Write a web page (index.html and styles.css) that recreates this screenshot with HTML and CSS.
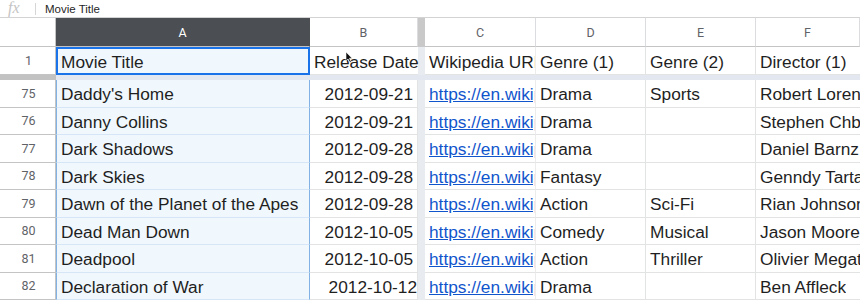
FILE: index.html
```html
<!DOCTYPE html>
<html>
<head>
<meta charset="utf-8">
<link rel="stylesheet" href="styles.css">
</head>
<body>
<div class="formula">
  <span class="fx">fx</span>
  <span class="fsep"></span>
  <span class="ftext">Movie Title</span>
</div>
<div class="grid">
  <div class="corner"></div>
  <div class="ch sel">A</div>
  <div class="ch">B</div>
  <div class="fzv-h"></div>
  <div class="ch">C</div>
  <div class="ch">D</div>
  <div class="ch">E</div>
  <div class="ch">F</div>

  <div class="rh r1">1</div>
  <div class="c r1 colA active">Movie Title</div>
  <div class="c r1 ovr">Release Date<svg class="cursor" width="8" height="11" viewBox="0 0 8 11"><path d="M1 0 L1 9 L3 7 L5 10.5 L6.3 9.8 L4.4 6.4 L7 6.2 Z" fill="#111" stroke="#fff" stroke-width="0.6"/></svg></div>
  <div class="fzv r1"></div>
  <div class="c cc r1"><span class="clip">Wikipedia URL</span></div>
  <div class="c r1">Genre (1)</div>
  <div class="c r1">Genre (2)</div>
  <div class="c r1 last"><span class="clip">Director (1)</span></div>

  <div class="fzh-rh"></div>
  <div class="fzh"></div>

  <div class="rh">75</div><div class="c colA">Daddy's Home</div><div class="c num">2012-09-21</div><div class="fzv"></div><div class="c cc"><a class="clip" href="#">https://en.wikipedia.org/wiki/Daddy%27s_Home</a></div><div class="c">Drama</div><div class="c">Sports</div><div class="c last"><span class="clip">Robert Lorenz</span></div>
  <div class="rh">76</div><div class="c colA">Danny Collins</div><div class="c num">2012-09-21</div><div class="fzv"></div><div class="c cc"><a class="clip" href="#">https://en.wikipedia.org/wiki/Danny_Collins</a></div><div class="c">Drama</div><div class="c"></div><div class="c last"><span class="clip">Stephen Chbosky</span></div>
  <div class="rh">77</div><div class="c colA">Dark Shadows</div><div class="c num">2012-09-28</div><div class="fzv"></div><div class="c cc"><a class="clip" href="#">https://en.wikipedia.org/wiki/Dark_Shadows</a></div><div class="c">Drama</div><div class="c"></div><div class="c last"><span class="clip">Daniel Barnz</span></div>
  <div class="rh">78</div><div class="c colA">Dark Skies</div><div class="c num">2012-09-28</div><div class="fzv"></div><div class="c cc"><a class="clip" href="#">https://en.wikipedia.org/wiki/Dark_Skies</a></div><div class="c">Fantasy</div><div class="c"></div><div class="c last"><span class="clip">Genndy Tartakovsky</span></div>
  <div class="rh">79</div><div class="c colA">Dawn of the Planet of the Apes</div><div class="c num">2012-09-28</div><div class="fzv"></div><div class="c cc"><a class="clip" href="#">https://en.wikipedia.org/wiki/Dawn_of_the_Planet_of_the_Apes</a></div><div class="c">Action</div><div class="c">Sci-Fi</div><div class="c last"><span class="clip">Rian Johnson</span></div>
  <div class="rh">80</div><div class="c colA">Dead Man Down</div><div class="c num">2012-10-05</div><div class="fzv"></div><div class="c cc"><a class="clip" href="#">https://en.wikipedia.org/wiki/Dead_Man_Down</a></div><div class="c">Comedy</div><div class="c">Musical</div><div class="c last"><span class="clip">Jason Moore</span></div>
  <div class="rh">81</div><div class="c colA">Deadpool</div><div class="c num">2012-10-05</div><div class="fzv"></div><div class="c cc"><a class="clip" href="#">https://en.wikipedia.org/wiki/Deadpool</a></div><div class="c">Action</div><div class="c">Thriller</div><div class="c last"><span class="clip">Olivier Megaton</span></div>
  <div class="rh">82</div><div class="c colA">Declaration of War</div><div class="c num shifted">2012-10-12</div><div class="fzv"></div><div class="c cc"><a class="clip" href="#">https://en.wikipedia.org/wiki/Declaration_of_War</a></div><div class="c">Drama</div><div class="c"></div><div class="c last"><span class="clip">Ben Affleck</span></div>
</div>
</body>
</html>
```
FILE: styles.css
```css
html, body {
  margin: 0;
  padding: 0;
  background: #fff;
  width: 860px;
  height: 301px;
  overflow: hidden;
}
body {
  font-family: "Liberation Sans", Arial, sans-serif;
  color: #1f1f1f;
}
.formula {
  height: 17px;
  border-bottom: 1px solid #d3d3d3;
  display: flex;
  align-items: center;
  box-sizing: content-box;
}
.fx {
  font-family: "Liberation Serif", serif;
  font-style: italic;
  color: #c4c4c4;
  font-size: 16px;
  margin-left: 8px;
  width: 17px;
  margin-top: -2px;
}
.fsep {
  width: 1px;
  height: 12px;
  background: #d6d6d6;
  margin-left: 10px;
  margin-right: 9px;
}
.ftext {
  font-size: 11.5px;
  color: #1f1f1f;
}
.grid {
  display: grid;
  grid-template-columns: 56px 254px 108px 7px 111px 110px 110px 104px;
  grid-template-rows: 29px 28px 5px repeat(8, 27.5px);
  width: 860px;
}
.corner {
  border-right: 1px solid #c4c4c4;
  border-bottom: 1px solid #c4c4c4;
  box-sizing: border-box;
}
.ch {
  font-family: Roboto, "Liberation Sans", sans-serif;
  font-size: 12.5px;
  color: #5f6368;
  display: flex;
  align-items: center;
  justify-content: center;
  border-right: 1px solid #dadce0;
  border-bottom: 1px solid #c4c4c4;
  box-sizing: border-box;
  padding-top: 1px;
}
.ch.sel {
  background: #4b4e52;
  color: #fff;
  border-right-color: #4b4e52;
}
.ch:last-child {
  padding-left: 6px;
}
.fzv-h {
  background: #c9c9c9;
}
.rh {
  font-family: Roboto, "Liberation Sans", sans-serif;
  font-size: 12.5px;
  color: #5f6368;
  display: flex;
  align-items: center;
  justify-content: center;
  border-right: 1px solid #c4c4c4;
  border-bottom: 1px solid #c4c4c4;
  box-sizing: border-box;
  padding-left: 2px;
}
.c {
  font-size: 17.3px;
  white-space: nowrap;
  overflow: hidden;
  display: flex;
  align-items: center;
  padding: 3px 4px 0 4px;
  border-right: 1px solid #e2e3e3;
  border-bottom: 1px solid #e2e3e3;
  box-sizing: border-box;
  position: relative;
  min-width: 0;
}
.c.cc {
  padding-right: 0;
  padding-left: 4px;
  border-right-color: #ececec;
}
.clip {
  display: block;
  overflow: hidden;
  min-width: 0;
  white-space: nowrap;
}
.c a {
  color: #1155cc;
  text-decoration: underline;
}
.c.last {
  border-right: none;
  padding-right: 0;
}
.c.num {
  justify-content: flex-end;
}
.c.shifted {
  padding-right: 0;
  overflow: visible;
}
.c.colA {
  background: #f1f8fd;
  border-bottom-color: #d6e6f6;
  border-right: 1px solid #82b2e4;
  border-left: 1px solid #82b2e4;
}
.c.active {
  border: 2px solid #1a73e8;
  padding-left: 3px;
  padding-top: 2px;
}
.c.ovr {
  overflow: visible;
  padding-right: 0;
  border-right: none;
}
.cursor {
  position: absolute;
  left: 35px;
  top: 5px;
}
.fzv {
  background: #e8ebf0;
}
.fzh-rh {
  background: #c2c2c2;
}
.fzh {
  grid-column: 2 / 9;
  background: #e3e8f0;
}
```
